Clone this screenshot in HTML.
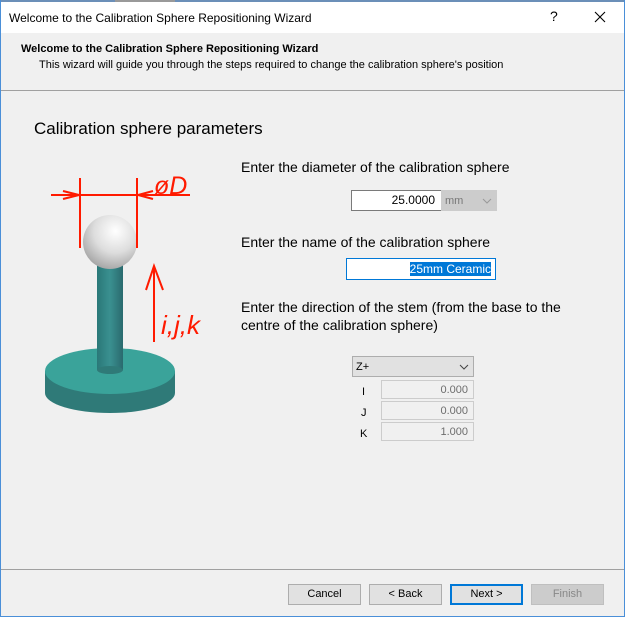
<!DOCTYPE html>
<html><head><meta charset="utf-8"><style>
*{margin:0;padding:0;box-sizing:border-box}
body{width:625px;height:617px;background:#f0f0f0;font-family:"Liberation Sans",Arial,sans-serif;position:relative;overflow:hidden;color:#000}
.a{position:absolute}
.t{font-size:14px;white-space:nowrap}
.s{font-size:11px;white-space:nowrap}
.box{position:absolute;border:1px solid #7a7a7a;background:#fff;font-size:12px;text-align:right;padding-right:6px}
.dis{position:absolute;border:1px solid #ccc;background:#f0f0f0;color:#6d6d6d;font-size:11px;text-align:right;padding-right:5px;line-height:19px}
.btn{position:absolute;top:584px;width:73px;height:21px;border:1px solid #adadad;background:#e1e1e1;font-size:11px;text-align:center;line-height:19px}
</style></head><body>
<div class="a" style="left:0;top:0;width:625px;height:2px;background:#6b8fb8"></div>
<div class="a" style="left:115px;top:0;width:60px;height:2px;background:#999"></div>
<div class="a" style="left:0;top:0;width:1px;height:617px;background:#4a8fd8"></div>
<div class="a" style="right:0;top:0;width:1px;height:617px;background:#4a8fd8"></div>
<div class="a" style="left:0;bottom:0;width:625px;height:1px;background:#4a8fd8"></div>
<div class="a" style="left:1px;top:2px;width:623px;height:31px;background:#fff"></div>
<div class="a s" style="left:9px;top:11px;font-size:12px">Welcome to the Calibration Sphere Repositioning Wizard</div>
<div class="a" style="left:550px;top:8px;font-size:14px">?</div>
<svg class="a" style="left:594px;top:11px" width="12" height="12"><path d="M1 1L11 11M11 1L1 11" stroke="#000" stroke-width="1.1"/></svg>
<div class="a s" style="left:21px;top:43px;font-weight:bold">Welcome to the Calibration Sphere Repositioning Wizard</div>
<div class="a s" style="left:39px;top:59px">This wizard will guide you through the steps required to change the calibration sphere's position</div>
<div class="a" style="left:1px;top:90px;width:623px;height:1px;background:#a0a0a0"></div>
<div class="a" style="left:34px;top:119px;font-size:17px;white-space:nowrap">Calibration sphere parameters</div>
<svg class="a" style="left:0;top:150px" width="240" height="280" viewBox="0 150 240 280">
<defs>
<radialGradient id="sp" cx="0.6" cy="0.3" r="0.8"><stop offset="0" stop-color="#fff"/><stop offset="0.5" stop-color="#ddd"/><stop offset="1" stop-color="#999"/></radialGradient>
<linearGradient id="st" x1="0" x2="1"><stop offset="0" stop-color="#2a7878"/><stop offset="0.5" stop-color="#3a9090"/><stop offset="1" stop-color="#2a6a6e"/></linearGradient>
</defs>
<path d="M45 371 L45 393 A65 20 0 0 0 175 393 L175 371 Z" fill="#2f7a78"/>
<ellipse cx="110" cy="371" rx="65" ry="23" fill="#3aa39a"/>
<rect x="97" y="260" width="26" height="110" fill="url(#st)"/>
<ellipse cx="110" cy="370" rx="13" ry="4" fill="#2f7a78"/>
<circle cx="110" cy="242" r="27" fill="url(#sp)"/>
<g stroke="#ff1a00" stroke-width="2" fill="none">
<path d="M51 195H190M80 178V248M137 178V248"/>
<path d="M63 191L79 195L63 199M153 191L138 195L153 199"/>
<path d="M154 342V266M146 290L154 266L163 290"/>
</g>
<text x="154" y="194" fill="#ff1a00" font-size="25" font-style="italic" font-family="Liberation Sans">øD</text>
<text x="161" y="334" fill="#ff1a00" font-size="26" font-style="italic" font-family="Liberation Sans">i,j,k</text>
</svg>
<div class="a t" style="left:241px;top:159px">Enter the diameter of the calibration sphere</div>
<div class="box" style="left:351px;top:190px;width:91px;height:21px;line-height:19px">25.0000</div>
<div class="a" style="left:441px;top:190px;width:56px;height:21px;border:1px solid #ccc;background:#ccc;font-size:11px;color:#777;padding-left:3px;line-height:20px">mm<svg style="position:absolute;right:4px;top:7px" width="10" height="6"><path d="M1 1L5 5L9 1" stroke="#999" fill="none"/></svg></div>
<div class="a t" style="left:241px;top:234px">Enter the name of the calibration sphere</div>
<div class="box" style="left:346px;top:258px;width:150px;height:22px;border-color:#0078d7;line-height:20px;padding-right:4px"><span style="background:#0078d7;color:#fff">25mm Ceramic</span></div>
<div class="a t" style="left:241px;top:299px">Enter the direction of the stem (from the base to the</div>
<div class="a t" style="left:241px;top:317px">centre of the calibration sphere)</div>
<div class="a" style="left:352px;top:356px;width:122px;height:21px;border:1px solid #adadad;background:#e1e1e1;font-size:11px;padding-left:3px;line-height:21px">Z+<svg style="position:absolute;right:4px;top:7px" width="10" height="6"><path d="M1 1L5 5L9 1" stroke="#444" fill="none"/></svg></div>
<div class="a s" style="left:362px;top:386px">I</div>
<div class="a s" style="left:361px;top:407px">J</div>
<div class="a s" style="left:360px;top:428px">K</div>
<div class="dis" style="left:381px;top:380px;width:93px;height:19px">0.000</div>
<div class="dis" style="left:381px;top:401px;width:93px;height:19px">0.000</div>
<div class="dis" style="left:381px;top:422px;width:93px;height:19px">1.000</div>
<div class="a" style="left:1px;top:569px;width:623px;height:1px;background:#a0a0a0"></div>
<div class="btn" style="left:288px">Cancel</div>
<div class="btn" style="left:369px">&lt; Back</div>
<div class="btn" style="left:450px;border:2px solid #0078d7;line-height:17px">Next &gt;</div>
<div class="btn" style="left:531px;background:#ccc;border-color:#bfbfbf;color:#888">Finish</div>
</body></html>
